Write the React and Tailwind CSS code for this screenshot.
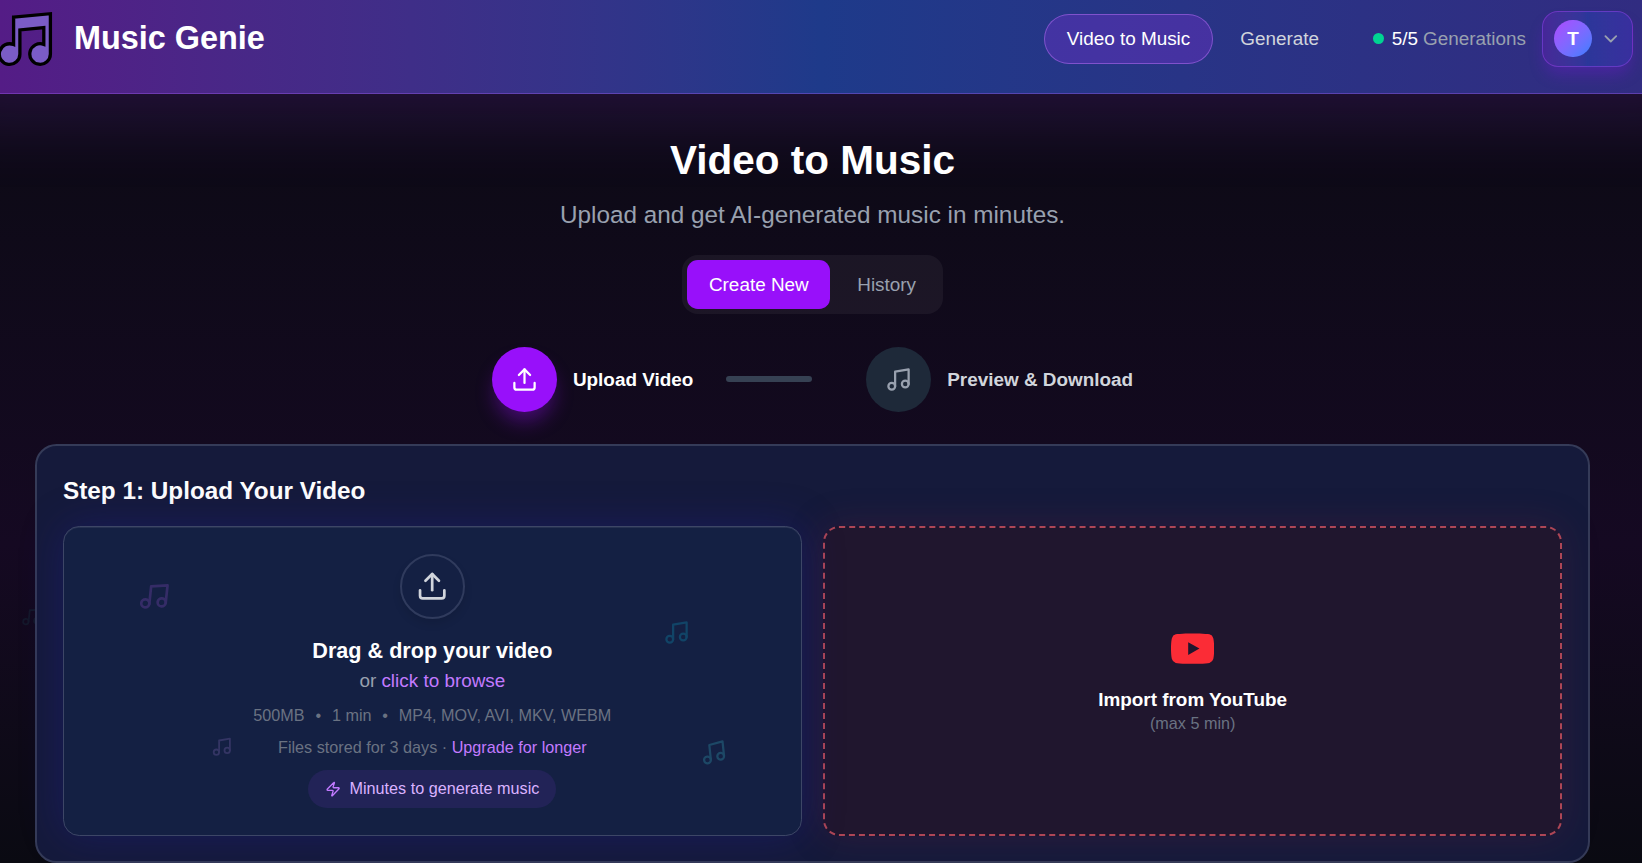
import { Music, Upload, Zap, ChevronDown } from 'lucide-react';
import { SiYoutube } from 'react-icons/si';

function Logo() {
  return (
    <svg className="h-[57px] w-[54px] shrink-0" viewBox="0 10 54 57" fill="none">
      <path
        d="M13.6 17.1 50.4 13.7V54A10.3 10.3 0 1 1 43.8 44.4V27.6L19.9 29.9V54A10.3 10.3 0 1 1 13.6 44.6Z"
        fill="#7a5cc6"
        stroke="#000"
        strokeWidth="3.3"
        strokeLinejoin="miter"
      />
    </svg>
  );
}

function Header() {
  return (
    <header className="relative h-[94px] border-b border-[#9f5cf0]/40 bg-linear-to-r from-[#541c86] via-[#1e3a8a] to-[#312c81] shadow-[0_-32px_62px_60px_rgba(147,51,234,0.17)]">
      <div className="flex h-[77px] items-center justify-between pr-[9px]">
        <div className="flex items-center gap-[20px]">
          <Logo />
          <span className="text-[32.4px] font-bold leading-none text-white">Music Genie</span>
        </div>
        <div className="flex items-center">
          <div className="flex h-[50px] items-center rounded-full border border-[#9a5fe0]/70 bg-[#8a30e0]/30 px-[22px] pt-[2px] text-[18.9px] font-medium text-white">
            Video to Music
          </div>
          <div className="ml-[27px] pt-[2px] text-[18.9px] font-medium text-[#d1d5dc]">Generate</div>
          <div className="ml-[54px] flex items-center text-[18.9px]">
            <span className="mr-[8px] size-[10.8px] rounded-full bg-[#00d492]" />
            <span className="pt-[2px] font-medium text-white">5/5</span>
            <span className="ml-[5px] pt-[2px] text-[#99a1af]">Generations</span>
          </div>
          <div className="ml-[16px] flex h-[56px] w-[91px] items-center rounded-[16px] border border-[#ad46ff]/40 bg-linear-to-r from-[#8a10da]/25 via-[#155dfc]/20 to-[#4f39f6]/25 pl-[11px] shadow-[0_10px_16px_-3px_rgba(152,16,250,0.25)]">
            <div className="flex size-[37.8px] items-center justify-center rounded-full bg-linear-to-br from-[#ad46ff] to-[#2b7fff] pt-px text-[18.9px] font-bold text-white">
              T
            </div>
            <ChevronDown className="ml-[8px] size-[21.6px] text-[#99a1af]" />
          </div>
        </div>
      </div>
    </header>
  );
}

function Tabs() {
  return (
    <div className="mx-auto mt-[23px] flex h-[59px] w-fit gap-[5.4px] rounded-[16.2px] bg-white/5 p-[5px] text-[18.9px] font-medium">
      <div className="flex items-center rounded-[10.8px] bg-[#9810fa] px-[21.6px] pt-px text-white">Create New</div>
      <div className="flex items-center px-[21.6px] pt-px text-[#99a1af]">History</div>
    </div>
  );
}

function Steps() {
  return (
    <div className="mt-[33px] flex h-[65px] items-center justify-center text-[18.9px] font-bold">
      <div className="flex size-[65px] items-center justify-center rounded-full bg-[#9810fa] text-white shadow-[0_13px_20px_-4px_rgba(152,16,250,0.4)]">
        <Upload className="size-[27px]" />
      </div>
      <span className="ml-[16px] pt-px text-white">Upload Video</span>
      <div className="mr-[54px] mb-px ml-[33px] h-[6px] w-[86px] rounded-full bg-[#364153]" />
      <div className="flex size-[65px] items-center justify-center rounded-full bg-[#1e2939] text-[#99a1af]">
        <Music className="size-[27px]" />
      </div>
      <span className="ml-[16px] pt-px text-[#d1d5dc]">Preview &amp; Download</span>
    </div>
  );
}

function UploadCard() {
  return (
    <div className="relative flex h-[310px] flex-col items-center rounded-[16.2px] border border-[#3d4666] bg-[#142043] pt-[27px] shadow-[inset_0_1px_0_rgba(255,255,255,0.08),0_0_40px_rgba(30,27,140,0.4)]">
      <Music className="absolute top-[53px] left-[74px] size-[32.4px] rotate-6 text-[#352c67]" />
      <Music className="absolute top-[92px] left-[599px] size-[27px] text-[#114467]" />
      <Music className="absolute top-[209px] left-[147px] size-[21.6px] text-[#343564]" />
      <Music className="absolute top-[212px] left-[636px] size-[27px] -rotate-6 text-[#1d4866]" />
      <div className="flex size-[65px] shrink-0 items-center justify-center rounded-full border-2 border-[#303b5d] text-[#d1d5dc] shadow-[0_5px_9px_rgba(0,0,0,0.1)]">
        <Upload className="size-[32.4px]" />
      </div>
      <div className="mt-[16px] text-[21.6px] leading-[32px] font-bold text-white">Drag &amp; drop your video</div>
      <div className="text-[18.9px] leading-[27px] text-[#99a1af]">
        or <span className="text-[#c27aff]">click to browse</span>
      </div>
      <div className="mt-[10px] flex gap-[10.8px] text-[16.2px] leading-[22px] text-[#6a7282]">
        <span>500MB</span>
        <span>•</span>
        <span>1 min</span>
        <span>•</span>
        <span>MP4, MOV, AVI, MKV, WEBM</span>
      </div>
      <div className="mt-[10px] text-[16.2px] leading-[22px] text-[#6a7282]">
        Files stored for 3 days · <span className="text-[#c27aff]">Upgrade for longer</span>
      </div>
      <div className="mt-[12px] flex h-[38px] items-center gap-[8px] rounded-full bg-[#222357] px-[17px] text-[16.2px] font-medium text-[#dab2ff]">
        <Zap className="size-[16.2px] text-[#c27aff]" />
        <span className="pb-[2px]">Minutes to generate music</span>
      </div>
    </div>
  );
}

function YoutubeCard() {
  return (
    <div className="flex h-[310px] flex-col items-center rounded-[16.2px] border-2 border-dashed border-[#ad4656] bg-[#20162e] pt-[99px] shadow-[0_0_36px_rgba(120,30,60,0.25)]">
      <SiYoutube className="size-[43.2px] text-[#fb2c36]" />
      <div className="mt-[16px] text-[18.9px] leading-[27px] font-bold text-white">Import from YouTube</div>
      <div className="-mt-px text-[16.2px] leading-[22px] text-[#6a7282]">(max 5 min)</div>
    </div>
  );
}

export default function App() {
  return (
    <div className="h-[863px] overflow-hidden bg-linear-to-b from-[#0a0a12] via-[#150922] via-63% to-[#0a0a12] font-['Liberation_Sans',Arial,sans-serif]">
      <Header />
      <main className="relative pr-[17px]">
        <h1 className="pt-[42px] text-center text-[40.5px] leading-[48px] font-bold text-white">Video to Music</h1>
        <p className="mt-[14px] text-center text-[24.3px] leading-[34px] text-[#99a1af]">
          Upload and get AI-generated music in minutes.
        </p>
        <Tabs />
        <Steps />
        <Music className="absolute top-[512px] left-[21px] size-[21.6px] rotate-6 text-[#14182a]" />
        <section className="relative mt-[32px] mr-[35px] ml-[35px] h-[419px] rounded-[21.6px] border-2 border-[#353b58] bg-[#151a3b] px-[26px] pt-[28px]">
          <h2 className="text-[24.3px] leading-[34px] font-bold text-white">Step 1: Upload Your Video</h2>
          <div className="mt-[18px] grid grid-cols-2 gap-[21.6px]">
            <UploadCard />
            <YoutubeCard />
          </div>
        </section>
      </main>
    </div>
  );
}
